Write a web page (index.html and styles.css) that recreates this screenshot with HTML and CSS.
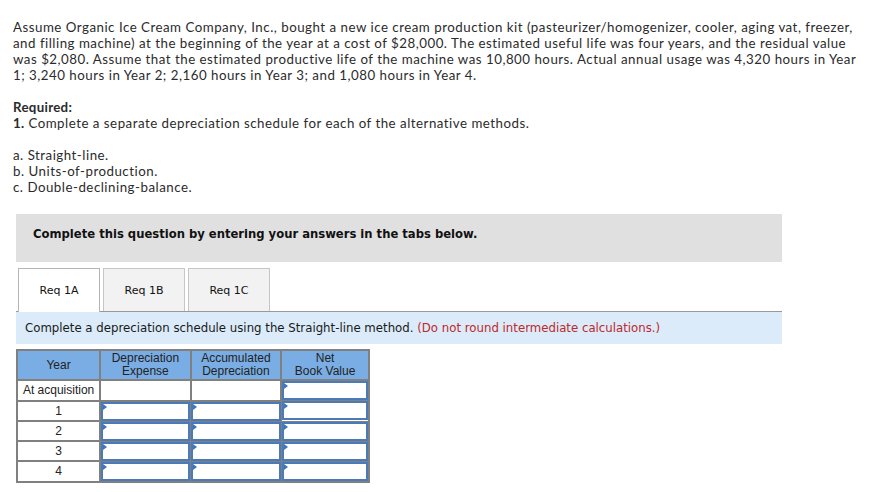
FILE: index.html
```html
<!DOCTYPE html>
<html>
<head>
<meta charset="utf-8">
<link rel="stylesheet" href="styles.css">
</head>
<body>
<div class="page">
  <p class="intro">Assume Organic Ice Cream Company, Inc., bought a new ice cream production kit (pasteurizer/homogenizer, cooler, aging vat, freezer, and filling machine) at the beginning of the year at a cost of $28,000. The estimated useful life was four years, and the residual value was $2,080. Assume that the estimated productive life of the machine was 10,800 hours. Actual annual usage was 4,320 hours in Year 1; 3,240 hours in Year 2; 2,160 hours in Year 3; and 1,080 hours in Year 4.</p>
  <p class="req"><b>Required:</b><br><b>1.</b> Complete a separate depreciation schedule for each of the alternative methods.</p>
  <p class="list">a. Straight-line.<br>b. Units-of-production.<br>c. Double-declining-balance.</p>

  <div class="widget">
    <div class="banner">Complete this question by entering your answers in the tabs below.</div>
    <div class="tabs">
      <div class="tab active">Req 1A</div>
      <div class="tab">Req 1B</div>
      <div class="tab">Req 1C</div>
    </div>
    <div class="instr">Complete a depreciation schedule using the Straight-line method. <span class="red">(Do not round intermediate calculations.)</span></div>
    <table class="sched">
      <thead>
        <tr>
          <th class="c-year">Year</th>
          <th>Depreciation<br>Expense</th>
          <th>Accumulated<br>Depreciation</th>
          <th>Net<br>Book Value</th>
        </tr>
      </thead>
      <tbody>
        <tr>
          <td class="yr">At acquisition</td>
          <td></td>
          <td></td>
          <td class="in"><div class="box"></div></td>
        </tr>
        <tr>
          <td class="yr">1</td>
          <td class="in"><div class="box"></div></td>
          <td class="in"><div class="box"></div></td>
          <td class="in"><div class="box"></div></td>
        </tr>
        <tr>
          <td class="yr">2</td>
          <td class="in"><div class="box"></div></td>
          <td class="in"><div class="box"></div></td>
          <td class="in"><div class="box"></div></td>
        </tr>
        <tr>
          <td class="yr">3</td>
          <td class="in"><div class="box"></div></td>
          <td class="in"><div class="box"></div></td>
          <td class="in"><div class="box"></div></td>
        </tr>
        <tr>
          <td class="yr">4</td>
          <td class="in"><div class="box"></div></td>
          <td class="in"><div class="box"></div></td>
          <td class="in"><div class="box"></div></td>
        </tr>
      </tbody>
    </table>
  </div>
</div>
</body>
</html>
```

FILE: styles.css
```css
html, body {
  margin: 0;
  padding: 0;
  background: #fff;
}

.page {
  padding: 19px 28px 0 13px;
  font-family: Lato, "Liberation Sans", sans-serif;
  font-size: 13.3px;
  letter-spacing: 0.5px;
  line-height: 16px;
  color: #2b2b2b;
}

.page p {
  margin: 0 0 16px 0;
}

.page b {
  font-weight: bold;
  letter-spacing: 0.3px;
}

.widget {
  margin: 19px 0 0 3px;
  width: 766px;
  letter-spacing: normal;
}

.banner {
  background: #e0e0e0;
  height: 48px;
  box-sizing: border-box;
  padding: 12px 0 0 17px;
  font-family: "DejaVu Sans", Verdana, sans-serif;
  font-weight: bold;
  font-size: 11.6px;
  line-height: 16px;
  color: #111;
}

.tabs {
  display: flex;
  gap: 3px;
  margin-top: 6px;
  padding-left: 2px;
  border-bottom: 1px solid #999;
  height: 43px;
}

.tab {
  width: 82px;
  height: 43px;
  box-sizing: border-box;
  border: 1px solid #c6c6c6;
  border-bottom: none;
  background: #f2f2f2;
  font-family: "DejaVu Sans", Verdana, sans-serif;
  font-size: 11px;
  line-height: 43px;
  text-align: center;
  color: #111;
}

.tab.active {
  background: #fff;
  border-color: #b5b5b5;
  height: 44px;
  margin-bottom: -1px;
}

.instr {
  background: #dbebf9;
  height: 32px;
  box-sizing: border-box;
  padding: 8px 0 0 9px;
  font-family: "DejaVu Sans", Verdana, sans-serif;
  font-size: 11.75px;
  line-height: 16px;
  color: #1a1a1a;
}

.red {
  color: #c0282d;
}

.sched {
  margin-top: 5px;
  border-collapse: collapse;
  width: 354px;
  font-family: "Liberation Sans", Arial, sans-serif;
  font-size: 12px;
  color: #222;
  border: 2px solid #808080;
}

.sched th {
  background: #7aade3;
  border: 2px solid #808080;
  font-weight: normal;
  line-height: 13px;
  height: 28px;
  padding: 0;
  width: 90px;
}

.sched th.c-year {
  width: 83px;
}

.sched td {
  border: 2px solid #808080;
  padding: 0;
  height: 18px;
  text-align: center;
  background: #fff;
}

.sched td.in {
  border: 1px solid #808080;
}

.box {
  position: relative;
  height: 15px;
  border: 2px solid #4a7ab8;
  background: #fff;
}

.box::before {
  content: "";
  position: absolute;
  left: 0;
  top: 0;
  width: 0;
  height: 0;
  border-top: 3px solid transparent;
  border-bottom: 3px solid transparent;
  border-left: 4px solid #3c75c0;
}
```
